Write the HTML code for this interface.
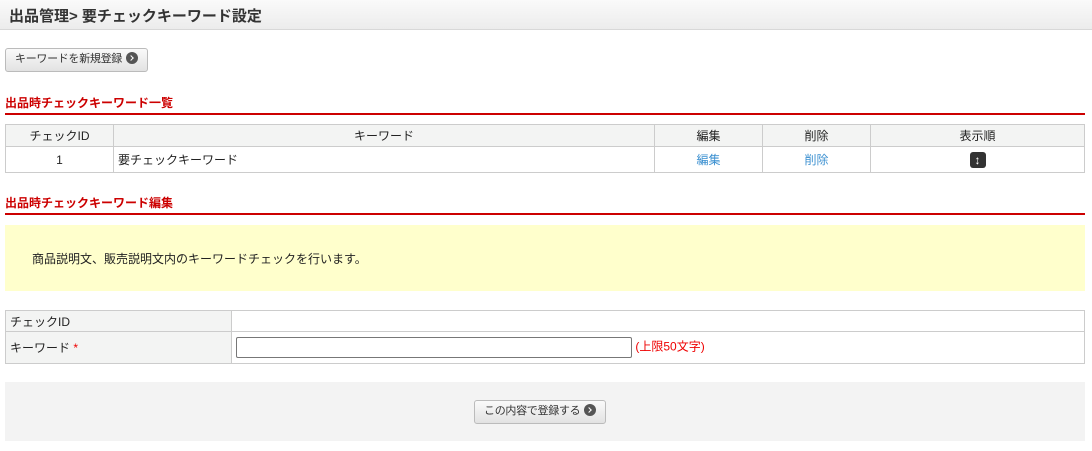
<!DOCTYPE html>
<html><head><meta charset="utf-8"><style>
*{box-sizing:border-box;margin:0;padding:0}
body{width:1092px;height:451px;background:#fff;font-family:"Liberation Sans","Noto Sans CJK JP",sans-serif;font-size:12px;color:#222;position:relative;overflow:hidden}
.hdr{position:absolute;left:0;top:0;width:1092px;height:30px;background:linear-gradient(#fafafa,#ececec);border-bottom:1px solid #d8d8d8}
.hdr span{position:absolute;left:9px;top:5px;font-size:15px;font-weight:bold;color:#333}
.btn{position:absolute;height:24px;border:1px solid #bbb;border-radius:3px;background:linear-gradient(#fafafa,#e2e2e2);font-size:11px;color:#333;line-height:21px;padding-left:9px;white-space:nowrap;letter-spacing:-0.3px}
.ic{display:inline-block;width:12px;height:12px;border-radius:50%;background:#555;vertical-align:-2px;margin-left:4px;position:relative}
.ic:after{content:"";position:absolute;left:3px;top:3.5px;width:3px;height:3px;border-right:1.5px solid #fff;border-top:1.5px solid #fff;transform:rotate(45deg)}
.sec{position:absolute;left:5px;width:1080px;height:21px;border-bottom:2px solid #c00;color:#c00;font-weight:bold;font-size:12px}
table{position:absolute;border-collapse:collapse;left:5px;width:1080px}
td,th{border:1px solid #ccc;font-weight:normal}
th{background:#f3f4f3;height:22px}
.l td{height:26px;text-align:center}
a{color:#3a8fd0;text-decoration:none}
.f td{height:21px;padding-left:4px;text-align:left}
.f td.lb{background:#f3f4f3;width:226px}
</style></head><body>
<div class="hdr"><span>出品管理&gt; 要チェックキーワード設定</span></div>
<div class="btn" style="left:5px;top:48px;width:143px">キーワードを新規登録<span class="ic"></span></div>
<div class="sec" style="top:94px">出品時チェックキーワード一覧</div>
<table class="l" style="top:124px">
<tr><th style="width:108px">チェックID</th><th style="width:541px">キーワード</th><th style="width:108px">編集</th><th style="width:108px">削除</th><th>表示順</th></tr>
<tr><td>1</td><td style="text-align:left;padding-left:4px">要チェックキーワード</td><td><a>編集</a></td><td><a>削除</a></td><td><span style="display:inline-block;width:16px;height:16px;background:#333;border-radius:3px;color:#fff;font-size:12px;line-height:16px;font-weight:bold;vertical-align:middle">↕</span></td></tr>
</table>
<div class="sec" style="top:194px">出品時チェックキーワード編集</div>
<div style="position:absolute;left:5px;top:225px;width:1080px;height:66px;background:#ffffcc;padding:25px 0 0 27px">商品説明文、販売説明文内のキーワードチェックを行います。</div>
<table class="f" style="top:310px">
<tr><td class="lb">チェックID</td><td></td></tr>
<tr><td class="lb" style="height:32px">キーワード <span style="color:#e00">*</span></td><td><span style="display:inline-block;width:396px;height:21px;border:1px solid #777;border-radius:2px;vertical-align:middle"></span> <span style="color:#e00">(上限50文字)</span></td></tr>
</table>
<div style="position:absolute;left:5px;top:382px;width:1080px;height:59px;background:#f3f3f3"></div>
<div class="btn" style="left:474px;top:400px;width:132px">この内容で登録する<span class="ic"></span></div>
</body></html>
